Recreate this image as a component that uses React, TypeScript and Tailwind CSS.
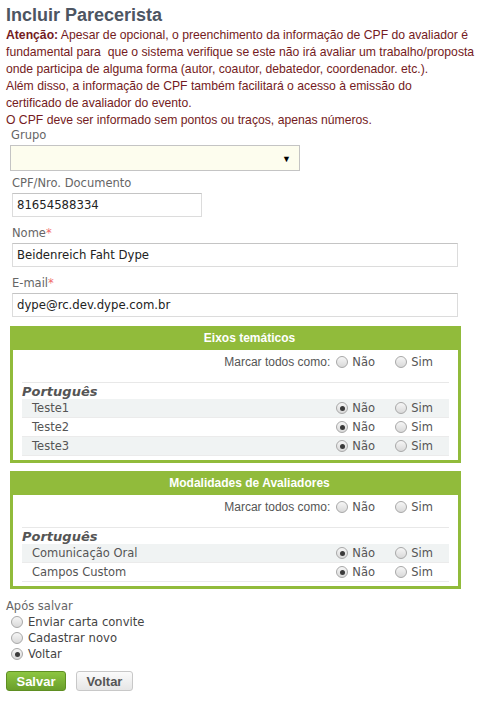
import React from "react";

const V = "font-['DejaVu_Sans',Verdana,sans-serif]";
const A = "font-['Liberation_Sans',Arial,sans-serif]";

function Radio({ checked }: { checked?: boolean }) {
  return (
    <span className="w-3 h-3 rounded-full border border-[#a8a8a8] bg-linear-to-b from-[#f6f6f6] to-[#d9d9d9] flex items-center justify-center shrink-0">
      {checked && <span className="w-[5px] h-[5px] rounded-full bg-[#3a3a3a]" />}
    </span>
  );
}

function RadioPair({ no }: { no?: boolean }) {
  return (
    <div className={`flex items-center pr-[16px] text-[11.5px] text-[#555] ${V}`}>
      <div className="flex items-center w-[59px]">
        <Radio checked={no} />
        <span className="ml-[4px]">Não</span>
      </div>
      <div className="flex items-center">
        <Radio />
        <span className="ml-[4px]">Sim</span>
      </div>
    </div>
  );
}

function Box({ title, rows }: { title: string; rows: string[] }) {
  return (
    <div className="ml-[10px] w-[451px] border-[3px] border-[#91bb3b]">
      <div className={`h-[21px] bg-[#91bb3b] flex items-center justify-center pl-[28px] pb-[3px] text-white text-[12px] font-bold ${A}`}>
        {title}
      </div>
      <div className="px-[9px] pt-[2px] pb-[4px]">
        <div className="h-[20px] flex items-center justify-end">
          <span className={`text-[12px] text-[#555] mr-[6px] ${A}`}>Marcar todos como:</span>
          <RadioPair />
        </div>
        <div className="mt-[10px] h-px bg-[#e8e8e8]" />
        <div className={`h-[16px] flex items-center text-[13px] font-bold italic text-[#555] ${V}`}>Português</div>
        {rows.map((r, i) => (
          <div
            key={r}
            className={`h-[19px] flex items-center justify-between border-b border-[#ebebeb] ${i % 2 === 0 ? "bg-[#f0f3f3]" : "bg-white"}`}
          >
            <span className={`pl-[10px] text-[11.5px] text-[#555] ${V}`}>{r}</span>
            <RadioPair no />
          </div>
        ))}
      </div>
    </div>
  );
}

export default function App() {
  const label = `h-[15px] leading-[15px] text-[11.5px] text-[#666] ${V}`;
  const input = `h-[24px] border border-[#dcdcdc] border-t-[#c4c4c4] bg-white flex items-center pl-[4px] text-[11.7px] text-[#222] ${V}`;
  return (
    <div className="w-[487px] h-[703px] bg-white overflow-hidden">
      <div className={`pt-[4px] pl-[6px] leading-[22px] text-[18px] font-bold text-[#4d5562] ${A}`}>Incluir Parecerista</div>
      <div className={`mt-[1px] pl-[6px] leading-[16.9px] text-[12.2px] text-[#741b22] whitespace-pre ${A}`}>
        <div><b>Atenção:</b> Apesar de opcional, o preenchimento da informação de CPF do avaliador é</div>
        <div>fundamental para  que o sistema verifique se este não irá avaliar um trabalho/proposta</div>
        <div>onde participa de alguma forma (autor, coautor, debatedor, coordenador. etc.).</div>
        <div>Além disso, a informação de CPF também facilitará o acesso à emissão do</div>
        <div>certificado de avaliador do evento.</div>
        <div>O CPF deve ser informado sem pontos ou traços, apenas números.</div>
      </div>

      <div className={`${label} pl-[11px]`}>Grupo</div>
      <div className="ml-[10px] mt-[2px] w-[290px] h-[26px] border border-[#c4c4c4] bg-[#fdfdee] flex items-center justify-end pr-[8px]">
        <span className="text-[9px] text-black leading-none">▼</span>
      </div>

      <div className={`${label} mt-[5px] pl-[12px]`}>CPF/Nro. Documento</div>
      <div className={`${input} ml-[12px] mt-[2px] w-[190px]`}>81654588334</div>

      <div className={`${label} mt-[9px] pl-[12px]`}>
        Nome<span className="text-[#f06a6a]">*</span>
      </div>
      <div className={`${input} ml-[12px] mt-[2px] w-[446px]`}>Beidenreich Faht Dype</div>

      <div className={`${label} mt-[9px] pl-[12px]`}>
        E-mail<span className="text-[#f06a6a]">*</span>
      </div>
      <div className={`${input} ml-[12px] mt-[2px] w-[446px]`}>dype@rc.dev.dype.com.br</div>

      <div className="mt-[9px]">
        <Box title="Eixos temáticos" rows={["Teste1", "Teste2", "Teste3"]} />
      </div>
      <div className="mt-[8px]">
        <Box title="Modalidades de Avaliadores" rows={["Comunicação Oral", "Campos Custom"]} />
      </div>

      <div className={`${label} mt-[10px] pl-[6px] text-[#555]`}>Após salvar</div>
      {[
        ["Enviar carta convite", false],
        ["Cadastrar novo", false],
        ["Voltar", true],
      ].map(([t, c]) => (
        <div key={t as string} className={`h-[16px] pl-[11px] flex items-center text-[11.6px] text-[#444] ${V}`}>
          <Radio checked={c as boolean} />
          <span className="ml-[5px]">{t as string}</span>
        </div>
      ))}

      <div className={`mt-[9px] ml-[6px] flex items-center gap-[10px] text-[13px] font-bold ${A}`}>
        <div className="w-[60px] h-[20px] rounded-[3px] border border-[#5f8f22] bg-linear-to-b from-[#8dc641] to-[#6a9f2b] text-white flex items-center justify-center">
          Salvar
        </div>
        <div className="w-[57px] h-[20px] rounded-[3px] border border-[#c8c8c8] bg-linear-to-b from-[#fbfbfb] to-[#e6e6e6] text-[#555] flex items-center justify-center">
          Voltar
        </div>
      </div>
    </div>
  );
}
